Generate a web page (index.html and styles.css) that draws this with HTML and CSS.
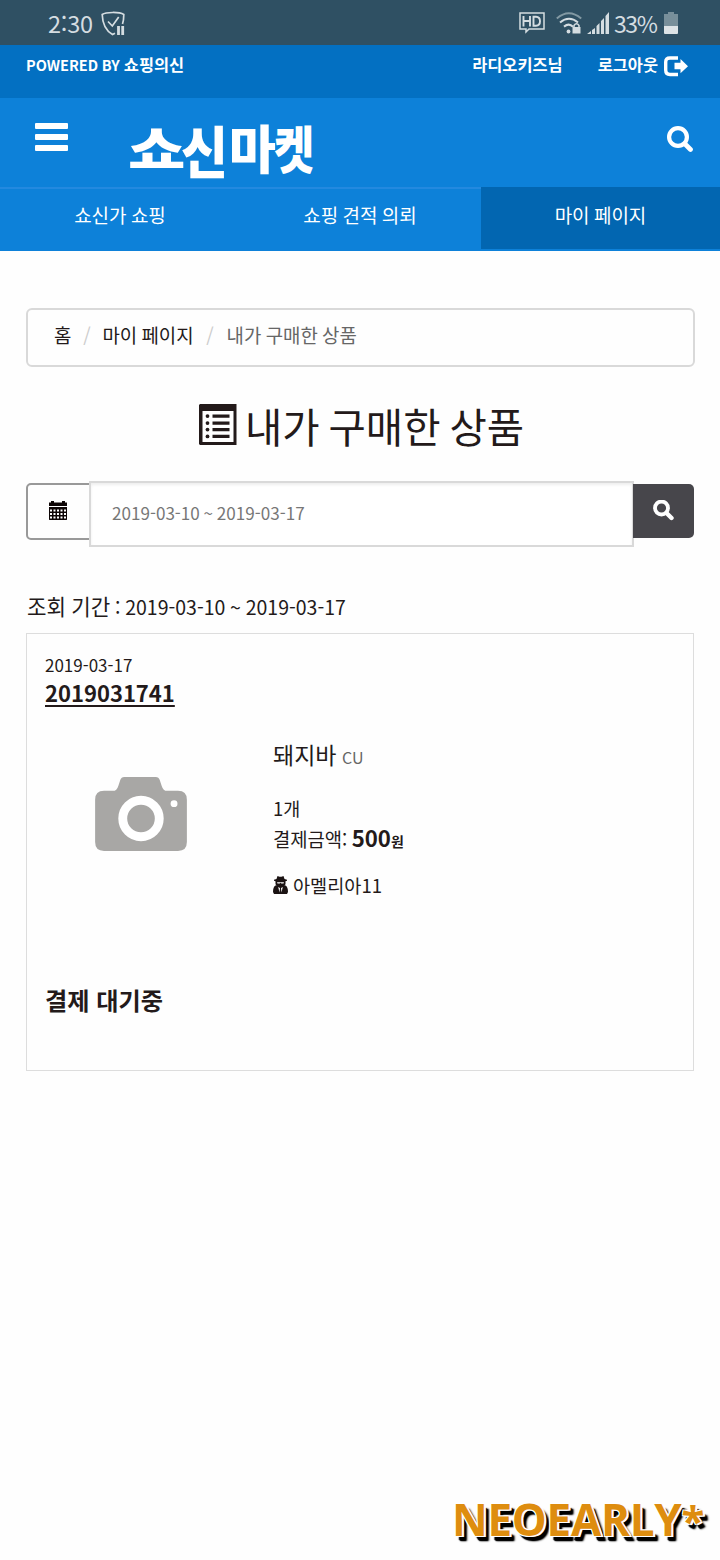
FILE: index.html
```html
<!DOCTYPE html>
<html lang="ko">
<head>
<meta charset="utf-8">
<title>쇼신마켓</title>
<link rel="stylesheet" href="styles.css">
</head>
<body>
<div class="status">
  <span class="clock">2:30</span>
  <svg class="shield" width="24" height="26" viewBox="0 0 24 26" fill="none" stroke="#d5dde1" stroke-width="1.700"><path d="M14 22.200l-2.500 1.300C4.500 19.500 1.500 13 1.200 3.500 5 1 18 .6 22.800 3.500c0 3.500-.3 6.500-1.300 9.500M7 10.500l4.300 4.500 6.400-9"/><path d="M17.500 15v9M21.700 15v9" stroke-width="2.800"/></svg>
  <div class="signals">
    <svg width="26" height="22" viewBox="0 0 26 22" fill="none" stroke="#d5dde1" stroke-width="1.500"><path d="M1 1h24v16H10l-3 3v-3H1z"/><path d="M4.500 4v10.500M11 4v10.500M4.500 9H11M14.500 4.800v8.900h2.500q4 0 4-4.400t-4-4.500z" stroke-width="1.900"/></svg>
    <svg class="wifi" width="26" height="23" viewBox="0 0 26 23" fill="none" stroke="#d5dde1" stroke-width="2"><path stroke="#8299a3" d="M.8 6.500q12-10.500 24.400 0"/><path d="M4 10.500q9-7.500 18 0M8 14.600q5-4 9 .2"/><circle cx="12.500" cy="19.500" r="1.900" fill="#d5dde1" stroke="none"/><path d="M16.500 15h8v6.500h-8z" fill="#d5dde1" stroke="none"/><path d="M18 15.500v-2q2.500-3.600 5 0v2" stroke-width="1.500"/></svg>
    <svg class="bars" width="22" height="22" viewBox="0 0 22 22" fill="#d5dde1"><path d="M0 22l4-3v3zM5 18l3-2v6H5zM9.500 14l3-3v11h-3zM14 9l3-3v16h-3zM18.500 4L22 0v22h-3.500z"/></svg>
    <span class="pct">33%</span>
    <svg class="batt" width="14" height="22" viewBox="0 0 14 22"><path fill="#788f9a" d="M4 0h6v2h4v12H0V2h4z"/><path fill="#dde3e6" d="M0 14h14v7q0 1-1 1H1q-1 0-1-1z"/></svg>
  </div>
</div>
<div class="topbar">
  <span class="powered"><span class="en">POWERED BY</span> 쇼핑의신</span>
  <span class="user">라디오키즈님</span>
  <span class="logout">로그아웃</span>
  <svg class="exit" width="24" height="21" viewBox="0 0 24 21"><path d="M14 2H6Q1.700 2 1.700 6v8q0 4.500 4.300 4.500h8" fill="none" stroke="#fff" stroke-width="3.400"/><path d="M10.500 6.700h6V3L24 10.200l-7.500 7v-4h-6z" fill="#fff"/></svg>
</div>
<header class="header">
  <svg class="menu" width="33" height="28" viewBox="0 0 33 28" fill="#fff"><rect width="33" height="6" rx="1"/><rect y="11" width="33" height="6" rx="1"/><rect y="22" width="33" height="6" rx="1"/></svg>
  <div class="logo"><span class="l1">쇼</span><span class="l2">신</span><span class="l3">마</span><span class="l4">켓</span></div>
  <svg class="find" width="26" height="27" viewBox="0 0 26 27" fill="none" stroke="#fff" stroke-width="4.200"><circle cx="11" cy="11" r="8.900"/><path d="M18 18l5.500 5.500" stroke-width="4.700" stroke-linecap="round"/></svg>
</header>
<nav class="nav"><a>쇼신가 쇼핑</a><a>쇼핑 견적 의뢰</a><a class="on">마이 페이지</a></nav>
<main class="main">
  <div class="crumbs"><span>홈</span><i>/</i><span>마이 페이지</span><i>/</i><span class="cur">내가 구매한 상품</span></div>
  <h1 class="title"><svg width="39" height="42" viewBox="0 0 39 42"><path fill="#231a1a" d="M1 0h36.500v41H1l-1-1V1z"/><path fill="#fff" d="M3.500 7h31v31h-31z"/><g fill="#231a1a"><path d="M13.500 10.500h17v3.200h-17zM13.500 17.500h17v3.200h-17zM13.500 24h17v3.200h-17zM13.500 30.800h17V34h-17z"/><circle cx="8.500" cy="12.100" r="1.900"/><circle cx="8.500" cy="19.100" r="1.900"/><circle cx="8.500" cy="25.600" r="1.900"/><circle cx="8.500" cy="32.400" r="1.900"/></g></svg><span>내가 구매한 상품</span></h1>
  <div class="range">
    <div class="cal"><svg width="18" height="20" viewBox="0 0 18 20"><path fill="#0d0505" d="M0 1.500h2V0h3v1.500h8V0h3v1.500h2V5H0zM0 6h18v12.500l-.5.500H.5l-.5-.5z"/><path fill="#fff" d="M4.500 8.500h2v2h-2zM8 8.500h2v2H8zM11.500 8.500h2v2h-2zM15 8.500h2v2h-2zM1 8.500h2v2H1zM1 12h2v2H1zM4.500 12h2v2h-2zM8 12h2v2H8zM11.500 12h2v2h-2zM15 12h2v2h-2zM1 15.500h2v2H1zM4.500 15.500h2v2h-2zM8 15.500h2v2H8zM11.500 15.500h2v2h-2zM15 15.500h2v2h-2z"/></svg></div>
    <div class="field">2019-03-10 ~ 2019-03-17</div>
    <div class="go"><svg width="21" height="21" viewBox="0 0 21 21" fill="none" stroke="#fff" stroke-width="3.800"><circle cx="8.500" cy="8" r="6.500"/><path d="M13.500 13l5 5" stroke-width="4.400" stroke-linecap="round"/></svg></div>
  </div>
  <div class="period"><span class="ko">조회 기간</span> : 2019-03-10 ~ 2019-03-17</div>
  <section class="card">
    <div class="date">2019-03-17</div>
    <a class="num">2019031741</a>
    <div class="item">
      <div class="photo"><svg width="92" height="74" viewBox="0 0 93 75"><path fill="#a8a7a5" d="M9 14h9q4 0 5.500-5l2-6q1-3 4-3h32q3 0 4 3l2 6q1.500 5 5.500 5h11q9 0 9 9v43q0 9-9 9H9q-9 0-9-9V23q0-9 9-9z"/><circle cx="46.500" cy="42" r="18.500" fill="none" stroke="#fff" stroke-width="9"/><circle cx="80" cy="27" r="3.500" fill="#fff"/></svg></div>
      <div class="info">
        <div class="name">돼지바 <small>CU</small></div>
        <div class="qty">1개</div>
        <div class="price">결제금액: <b>500</b><b class="won">원</b></div>
        <div class="seller"><svg width="15" height="18" viewBox="0 0 15 18"><path fill="#1a1212" d="M4.500 0l2 .7h2l2-.7 1 3 2.500.8v1l-1.500.4v3L11.500 9.500h1.200Q15 11 15 16l-1 2H1l-1-2q0-5 2.300-6.500h1.200L2.500 8.200v-3L1 4.800v-1L3.500 3z"/><path fill="#fff" d="M4 6.200h7L10.500 7.500H8.300l-.8-.7-.8.700H4.500zM5.200 11l1.800 1-.5 4.500zM9.800 11L8 12l.5 4.500z"/></svg><span>아멜리아11</span></div>
      </div>
    </div>
    <div class="state">결제 대기중</div>
  </section>
</main>
<div class="mark">NEOEARLY<span>*</span></div>
</body>
</html>
```
FILE: styles.css
```css
* { box-sizing: border-box; }
body {
  margin: 0;
  width: 720px;
  height: 1560px;
  display: flex;
  flex-direction: column;
  background: #fefefe;
  color: #231a1a;
  font-family: "Noto Sans CJK KR", sans-serif;
  font-size: 19px;
  line-height: 28px;
  white-space: nowrap;
  overflow: hidden;
}
svg { display: block; flex: none; }
.status { height: 45px; background: #2f5063; color: #d5dde1; display: flex; padding: 10px 42px 0 48px; font-size: 23.500px; font-weight: 400; }
.shield { margin: 1px 0 0 8px; }
.clock { width: 45px; margin-top: -1px; letter-spacing: -.2px; }
.signals { display: flex; margin-left: auto; padding-top: 2px; }
.wifi { margin-left: 11px; }
.bars { margin-left: 5px; }
.pct { margin: -3px 0 0 5px; width: 44px; font-size: 23px; letter-spacing: -1.400px; }
.batt { margin-left: 6px; }
.topbar { height: 53px; background: #0370c2; color: #fff; display: flex; padding: 5px 32px 0 26px; font-size: 16.400px; font-weight: 700; }
.en { font-size: 14.500px; word-spacing: -.5px; }
.powered { word-spacing: -.5px; }
.user { margin-left: auto; }
.logout { margin-left: 35px; }
.exit { margin: 6px 0 0 6px; }
.header { height: 89px; background: #0d81d9; display: flex; padding: 0 27px 0 35px; }
.menu { margin-top: 25px; }
.logo { display: flex; margin: 20px 0 0 60px; color: #fff; font-size: 52px; line-height: 60px; font-weight: 900; }
.logo span { transform-origin: 0 50%; }
.l1 { width: 53px; transform: translateY(-1px) scale(1.200, .94); }
.l2 { width: 48px; transform: translateY(2px) scale(.98, 1.080); }
.l3 { width: 45px; transform: translateY(-1px) scale(.98, 1); }
.l4 { width: 40px; transform: translateY(-1px) scale(.84, .98); }
.find { margin: 28px 0 0 auto; }
.nav { height: 64px; display: flex; background: #0d81d9; border-top: 2px solid #2389df; color: #fff; word-spacing: -1px; }
.nav a { width: 240px; padding-top: 12px; text-align: center; }
.nav a.on { width: 239px; margin: -2px 0 2px 1px; padding-top: 14px; background: #0266b1; }
.main { padding: 57px 26px 0; display: flex; flex-direction: column; }
.crumbs { width: 669px; height: 59px; border: 2px solid #d9d9d9; border-radius: 6px; padding: 11px 26px; display: flex; font-size: 18.900px; word-spacing: -1px; }
.crumbs i { width: 31px; text-align: center; color: #ccc; font-style: normal; }
.crumbs i + span + i { width: 33px; }
.crumbs .cur { color: #666; }
.title { margin: 30px 0 0 173px; height: 60px; display: flex; font-size: 40.600px; line-height: 58px; font-weight: 400; word-spacing: -2.500px; }
.title svg { margin: 7px 7px 0 0; }
.range { display: flex; margin-top: 24px; height: 66px; }
.cal { width: 65px; height: 57px; margin: 2px -2px 0 0; border: 2px solid #999; border-radius: 5px 0 0 5px; padding: 16px 21px; }
.field { position: relative; width: 545px; height: 66px; border: 2px solid #d9d9d9; background: #fff; box-shadow: inset 0 2px 3px #eee; padding: 16px 21px; font-size: 17.100px; word-spacing: -1px; color: #777; }
.go { width: 61px; height: 54px; margin: 3px 0 0 -1px; background: #47464b; border-radius: 0 5px 5px 0; padding: 16px 20px; position: relative; }
.period { margin: 45px 0 0 1px; font-size: 19.500px; height: 41px; word-spacing: -.7px; }
.ko { font-size: 21.200px; }
.card { width: 668px; height: 438px; border: 1px solid #ddd; padding: 17px 18px; display: flex; flex-direction: column; }
.date { font-size: 17px; }
.num { font-size: 22px; font-weight: 700; text-decoration: underline; text-decoration-thickness: 2px; text-underline-offset: 3px; align-self: flex-start; margin-top: -1px; }
.item { display: flex; height: 237px; }
.photo { width: 228px; padding: 71px 0 0 50px; }
.info { padding-top: 34px; }
.name { font-size: 23px; height: 54px; word-spacing: -1px; }
.name small { font-size: 16px; color: #666; }
.qty { font-size: 18.500px; height: 29px; }
.price { height: 48px; font-size: 18.800px; word-spacing: -1px; }
.price b { font-size: 22.200px; }
.price .won { font-size: 14px; }
.seller { display: flex; font-size: 18.600px; }
.seller svg { margin: 5px 5px 0 0; }
.state { font-size: 24.200px; font-weight: 700; margin-top: 43px; }
.mark { margin: auto 0 10px 452px; font: 700 44px/60px "Open Sans", sans-serif; letter-spacing: -.300px; color: #de8d0f; text-shadow: 1px 1px #fff, -1px -1px #fff, 1px -1px #fff, -1px 1px #fff, 2px 1px #fff, 3px 4px 1px #000, 4px 5px 1px #000, 5px 5px 2px #000; }
.mark span { font-size: 42px; }
```
